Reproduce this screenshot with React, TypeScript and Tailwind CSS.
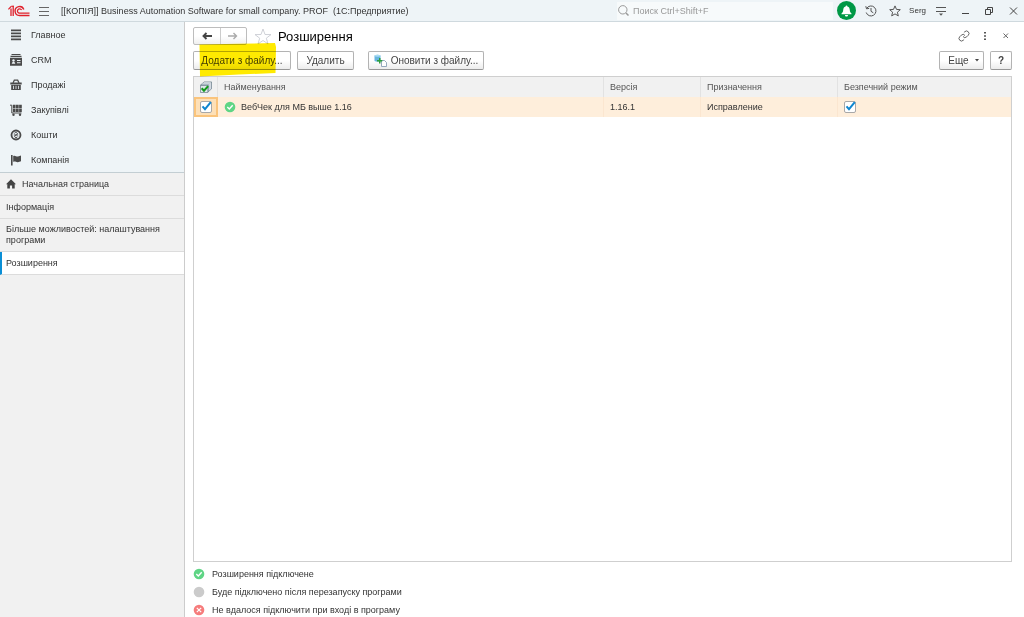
import React, { useState } from "react";

const RED = "#e0202b";

function Logo() {
  return (
    <svg width="22" height="12" viewBox="0 0 22 12" fill="none" stroke={RED} aria-label="1C" role="img">
      <path d="M0.400 4.400 L3.200 1.400" strokeWidth="1.300" />
      <path d="M3 3.600V11M5.200 0.800V11" strokeWidth="1.300" />
      <path d="M3.200 1.300h2.500" strokeWidth="1.100" />
      <path d="M15.800 4.400 A4.500 4.500 0 1 0 11.500 10.500 H21.500" strokeWidth="1.400" />
      <path d="M13.600 5 A2.200 2.200 0 1 0 11.500 8.200 H21.500" strokeWidth="1.300" />
    </svg>
  );
}

type Glyph = "menu" | "crm" | "basket" | "cart" | "money" | "flag";

function SectionIcon({ name }: { name: Glyph }) {
  return (
    <svg width="12" height="12" viewBox="0 0 12 12" fill="#4a4a4a" aria-hidden="true" className="shrink-0">
      {name === "menu" && <path d="M1 .6h10v1.700H1zM1 3.600h10v1.700H1zM1 6.600h10v1.700H1zM1 9.600h10v1.700H1z" />}
      {name === "crm" && (
        <>
          <path d="M1.500 0h9v1h-9zM0.500 1.700h11v1.300h-11zM0 3.800h12v8H0z" />
          <path d="M1.800 9.800c0-1.300.6-1.800 1.700-1.800s1.700.500 1.700 1.800zM7 6h3.500v1H7zM7 8.300h3.500v1H7z" fill="#eef4f7" />
          <circle cx="3.500" cy="6.500" r="1.200" fill="#eef4f7" />
        </>
      )}
      {name === "basket" && (
        <>
          <path d="M3 4 L4.300 1.200 H7.700 L9 4" fill="none" stroke="#4a4a4a" strokeWidth="1.200" />
          <path d="M0.300 3.500h11.400v2H.3zM1.200 6h9.600v5H1.200z" />
          <path d="M3.500 6.800v3.200M6 6.800v3.200M8.500 6.800v3.200" stroke="#eef4f7" strokeWidth=".8" />
        </>
      )}
      {name === "cart" && (
        <>
          <path d="M0 1.200h1.800V9h9.700" fill="none" stroke="#4a4a4a" />
          <path d="M2.900 .8h2.700v3.300H2.900zM6 .8h2.700v3.300H6zM9.100 .8h2.700v3.300H9.100zM2.900 4.500h2.700v3.500H2.900zM6 4.500h2.700v3.500H6zM9.100 4.500h2.700v3.500H9.100z" />
          <circle cx="3.500" cy="10.700" r="1.200" />
          <circle cx="10" cy="10.700" r="1.200" />
        </>
      )}
      {name === "money" && (
        <>
          <circle cx="6" cy="6" r="4.500" fill="none" stroke="#4a4a4a" strokeWidth="1.800" />
          <path d="M4.300 4.500C4.800 3 7.600 3.200 7.400 4.800 7.200 6 4.600 6 4.600 7.400 4.700 8.900 7.200 8.900 7.800 7.500M3.800 6h4.400" fill="none" stroke="#4a4a4a" />
        </>
      )}
      {name === "flag" && <path d="M1 1h1.600v10.500H1zM3.200 2c2-1 3 .8 4.800.5C9 2.300 10 1.500 11 1.500v5.800c-1 0-2 .8-3.200.9C6 8.300 5 7 3.200 7.900z" />}
    </svg>
  );
}

type State = "ok" | "pending" | "failed";

function StatusIcon({ state }: { state: State }) {
  const fill = state === "ok" ? "#5fd585" : state === "pending" ? "#cbcbcb" : "#f67c7c";
  return (
    <svg width="12" height="12" viewBox="0 0 12 12" fill="none" aria-hidden="true" className="shrink-0">
      <circle cx="6" cy="6" r="5.300" fill={fill} />
      {state === "ok" && <path d="M3.300 6.100 5.300 8 8.700 4.300" stroke="#fff" strokeWidth="1.400" />}
      {state === "failed" && <path d="M3.800 3.800 8.200 8.200M8.200 3.800 3.800 8.200" stroke="#fff" strokeWidth="1.200" />}
    </svg>
  );
}

function Check({ label }: { label: string }) {
  const [on, setOn] = useState(true);
  return (
    <span className="inline-grid size-3 align-middle">
      <input
        type="checkbox"
        aria-label={label}
        checked={on}
        onChange={() => setOn(!on)}
        className="col-start-1 row-start-1 size-3 appearance-none rounded-xs border border-[#a8a8a8] bg-white"
      />
      {on && (
        <svg viewBox="0 0 12 12" fill="none" aria-hidden="true" className="pointer-events-none col-start-1 row-start-1 size-3 overflow-visible">
          <path d="M2.500 5.300 5 8.200 10.800 1.200" stroke="#0f86cf" strokeWidth="2" />
        </svg>
      )}
    </span>
  );
}

const buttonBase =
  "flex h-[19px] items-center justify-center rounded-xs border border-[#b3b3b3] border-b-[#979797] bg-linear-to-b from-white from-50% to-[#ececec] text-[10px] text-[#444]";

const sections: { name: Glyph; label: string }[] = [
  { name: "menu", label: "Главное" },
  { name: "crm", label: "CRM" },
  { name: "basket", label: "Продажі" },
  { name: "cart", label: "Закупівлі" },
  { name: "money", label: "Кошти" },
  { name: "flag", label: "Компанія" },
];

const legend: { state: State; label: string }[] = [
  { state: "ok", label: "Розширення підключене" },
  { state: "pending", label: "Буде підключено після перезапуску програми" },
  { state: "failed", label: "Не вдалося підключити при вході в програму" },
];

function TopBar() {
  return (
    <header className="flex h-[22px] shrink-0 items-center border-b border-[#cfd9de] bg-[#eef4f7] pr-[5px] pl-2">
      <Logo />
      <button aria-label="Меню" className="ml-2 flex size-3 items-center justify-center">
        <svg width="12" height="12" viewBox="0 0 12 12" stroke="#666" aria-hidden="true">
          <path d="M1 2.500h10M1 6.500h10M1 10.500h10" />
        </svg>
      </button>
      <span className="ml-[11px] whitespace-pre">[[КОПІЯ]] Business Automation Software for small company. PROF  (1С:Предприятие)</span>
      <label className="ml-auto flex h-[18px] w-[216px] items-center gap-1 bg-[#f7fafb] pl-px">
        <svg width="11" height="11" viewBox="0 0 11 11" fill="none" stroke="#999" aria-hidden="true">
          <circle cx="4.800" cy="4.800" r="4.200" />
          <path d="M8 8l2.500 2.500" strokeWidth="1.500" />
        </svg>
        <input type="search" aria-label="Поиск" placeholder="Поиск Ctrl+Shift+F" className="min-w-0 flex-1 bg-transparent outline-none placeholder:text-[#999]" />
      </label>
      <button aria-label="Сповіщення" className="ml-1 flex size-[19px] items-center justify-center rounded-full bg-[#009846]">
        <svg width="11" height="12" viewBox="0 0 11 12" fill="#fff" aria-hidden="true">
          <path d="M5.500 0.500c.6 0 .9.400.9.900C8.200 1.900 8.700 3.300 8.800 5c.1 1.800.6 2.600 1.700 3.500v.7H.5v-.7C1.600 7.600 2.100 6.800 2.200 5c.1-1.700.6-3.100 2.400-3.600 0-.5.3-.9.900-.9zM4 10h3c0 1-.6 1.500-1.500 1.500S4 11 4 10z" />
        </svg>
      </button>
      <button aria-label="Історія" className="ml-[9px]">
        <svg width="12" height="12" viewBox="0 0 12 12" fill="none" stroke="#555" aria-hidden="true">
          <path d="M1.600 3.500A5 5 0 1 1 1.200 7.500M0.800 1.200l.7 2.600 2.700-.4M6 3v3.300l2.300 1.500" />
        </svg>
      </button>
      <button aria-label="Обране" className="ml-3">
        <svg width="12" height="12" viewBox="0 0 12 12" fill="none" stroke="#555" aria-hidden="true">
          <path d="M6 .9l1.500 3.500 3.800.300-2.900 2.500.9 3.700L6 8.900l-3.300 2 .9-3.700L.7 4.700l3.800-.3z" />
        </svg>
      </button>
      <button className="ml-2 text-[8px]">Serg</button>
      <button aria-label="Налаштування" className="ml-[9px]">
        <svg width="12" height="10" viewBox="0 0 12 10" stroke="#555" aria-hidden="true">
          <path d="M1 1.500h10M1 5.500h10" />
          <path d="M4 7.500h4L6 9.800z" fill="#555" stroke="none" />
        </svg>
      </button>
      <button aria-label="Згорнути" className="ml-3">
        <svg width="12" height="10" viewBox="0 0 12 10" stroke="#444" aria-hidden="true"><path d="M3 7.500h7" /></svg>
      </button>
      <button aria-label="Розгорнути" className="ml-3">
        <svg width="12" height="10" viewBox="0 0 12 10" fill="none" stroke="#444" aria-hidden="true">
          <path d="M2.500 3.500h5v5h-5zM4.500 3V1.500h5v5H8" />
        </svg>
      </button>
      <button aria-label="Закрити програму" className="ml-3">
        <svg width="12" height="10" viewBox="0 0 12 10" stroke="#444" aria-hidden="true"><path d="M3 1.500l7 7M10 1.500l-7 7" /></svg>
      </button>
    </header>
  );
}

function Sidebar() {
  const row = "flex border-b border-[#dcdcdc] px-1.5";
  return (
    <aside className="flex w-[185px] shrink-0 flex-col border-r border-[#cccccc] bg-[#f1f1f1]">
      <nav aria-label="Розділи" className="border-b border-[#c3ced3] bg-[#eef4f7]">
        {sections.map((s) => (
          <a key={s.name} href="#" className="flex h-[25px] items-center gap-[9px] pl-[10px]">
            <SectionIcon name={s.name} />
            {s.label}
          </a>
        ))}
      </nav>
      <nav aria-label="Відкриті вікна" className="leading-[11px]">
        <a href="#" className={`${row} h-[23px] items-center gap-[6px]`}>
          <svg width="10" height="10" viewBox="0 0 10 10" fill="#444" aria-hidden="true">
            <path d="M5 .3L10 5.200H8.700V9.500H6.100V6.500H3.900v3H1.300V5.200H0z" />
          </svg>
          Начальная страница
        </a>
        <a href="#" className={`${row} h-[23px] items-center`}>Інформація</a>
        <a href="#" className={`${row} h-[33px] items-center`}>Більше можливостей: налаштування програми</a>
        <a href="#" aria-current="page" className="flex h-[23px] items-center border-b border-l-2 border-b-[#dcdcdc] border-l-[#0b8fd6] bg-white pl-1">
          Розширення
        </a>
      </nav>
    </aside>
  );
}

function TitleRow() {
  return (
    <div className="flex h-[18px] items-center">
      <div className="flex h-[18px] w-[54px] rounded-xs border border-[#bdbdbd] bg-linear-to-b from-white from-50% to-[#f0f0f0]">
        <button aria-label="Назад" className="flex flex-1 items-center justify-center border-r border-[#cccccc]">
          <svg width="10" height="8" viewBox="0 0 10 8" fill="none" stroke="#444" strokeWidth="1.900" aria-hidden="true"><path d="M10 4H1.500M4.500 1L1.500 4l3 3" /></svg>
        </button>
        <button aria-label="Вперед" className="flex flex-1 items-center justify-center">
          <svg width="10" height="8" viewBox="0 0 10 8" fill="none" stroke="#aaa" strokeWidth="1.400" aria-hidden="true"><path d="M0 4h8.500M5.500 1l3 3-3 3" /></svg>
        </button>
      </div>
      <button aria-label="Додати в обране" className="ml-[7px]">
        <svg width="18" height="17" viewBox="0 0 18 17" fill="none" stroke="#c9ccd2" strokeWidth=".9" aria-hidden="true">
          <path d="M9 1l2 5.500 6 .1-4.700 3.600 1.700 5.700-5-3.400-5 3.400 1.700-5.700L1 6.600l6-.1z" />
        </svg>
      </button>
      <h1 className="ml-[6px] pt-px text-[13px] leading-4 text-black">Розширення</h1>
      <div className="ml-auto flex items-center gap-3 pr-0.5">
        <button aria-label="Посилання">
          <svg width="12" height="12" viewBox="0 0 24 24" fill="none" stroke="#666" strokeWidth="2" aria-hidden="true">
            <path d="M10 13a5 5 0 0 0 7.540.540l3-3a5 5 0 0 0-7.070-7.070l-1.720 1.710" />
            <path d="M14 11a5 5 0 0 0-7.540-.540l-3 3a5 5 0 0 0 7.070 7.070l1.710-1.710" />
          </svg>
        </button>
        <button aria-label="Більше дій">
          <svg width="8" height="10" viewBox="0 0 8 10" fill="#555" aria-hidden="true"><path d="M2 1h2v1.500H2zM2 4.200h2v1.500H2zM2 7.400h2v1.500H2z" /></svg>
        </button>
        <button aria-label="Закрити">
          <svg width="8" height="8" viewBox="0 0 8 8" stroke="#666" aria-hidden="true"><path d="M1.500 1.500l4.500 4.500M6 1.500L1.500 6" /></svg>
        </button>
      </div>
    </div>
  );
}

function Toolbar() {
  return (
    <div className="mt-[6px] flex items-center">
      <div className="relative">
        <button className={`${buttonBase} w-[98px]`}>Додати з файлу...</button>
        <svg width="78" height="34" viewBox="0 0 78 34" aria-hidden="true" className="pointer-events-none absolute -top-2 left-1.5 mix-blend-multiply">
          <path d="M0.500 1.500L40 .8 76 0 77 4 76.500 30 40 31.500 1 33.500z" fill="#ffea00" />
        </svg>
      </div>
      <button className={`${buttonBase} ml-[6px] w-[57px]`}>Удалить</button>
      <button className={`${buttonBase} ml-[14px] w-[116px] gap-1`}>
        <svg width="13" height="13" viewBox="0 0 13 13" aria-hidden="true">
          <path d="M.5 1.500Q3.500-.2 6.500 1.500V7Q3.500 8.500.5 7z" fill="#67b5df" />
          <ellipse cx="3.500" cy="1.700" rx="3" ry="1" fill="#a9dcf2" />
          <path d="M7.500 6.500h3l2 2v4h-5z" fill="#fff" stroke="#7b94ad" strokeWidth=".8" />
          <path d="M3 6h2V4h1.500v2h1.800v1.500H6.500v2H5v-2H3z" fill="#2e9e3a" />
        </svg>
        Оновити з файлу...
      </button>
      <button className={`${buttonBase} ml-auto w-[45px] gap-1.5 pl-1`}>
        Еще
        <svg width="4" height="3" viewBox="0 0 4 3" fill="#444" aria-hidden="true"><path d="M0 0h4L2 2.500z" /></svg>
      </button>
      <button aria-label="Довідка" className={`${buttonBase} ml-[6px] w-[22px] font-bold`}>?</button>
    </div>
  );
}

function ExtensionsTable() {
  const th = "border-r border-[#e2e2e2] px-1.5 font-normal last:border-r-0";
  const td = "border-r border-[#fbe6d0] px-1.5 last:border-r-0";
  return (
    <div className="mt-[6px] min-h-0 flex-1 border border-[#cfcfcf] bg-white">
      <table className="w-full table-fixed border-separate border-spacing-0 text-left">
        <colgroup>
          <col className="w-6" />
          <col />
          <col className="w-[97px]" />
          <col className="w-[137px]" />
          <col className="w-[173px]" />
        </colgroup>
        <thead>
          <tr className="h-5 bg-[#f1f1f1] text-[#555]">
            <th className="border-r border-[#e2e2e2] p-0">
              <svg width="12" height="12" viewBox="0 0 13 13" fill="none" aria-label="Стан" role="img" className="mx-auto">
                <path d="M.5 4.500L4.500 1h8v7.500l-4 3.500z" fill="#9fb0bd" stroke="#6d7f8c" strokeWidth=".8" />
                <path d="M2.500 3h8v7M4 1.800h7.500v7" stroke="#e9eef1" strokeWidth=".8" />
                <path d="M.5 4.800h8v7.700h-8z" fill="#dfe6ea" stroke="#6d7f8c" strokeWidth=".8" />
                <path d="M1.800 7.800l2.500 2.700L8.800 5.500" stroke="#119a1c" strokeWidth="2.200" />
              </svg>
            </th>
            <th className={th}>Найменування</th>
            <th className={th}>Версія</th>
            <th className={th}>Призначення</th>
            <th className={th}>Безпечний режим</th>
          </tr>
        </thead>
        <tbody>
          <tr className="h-5 bg-[#feeedb]">
            <td className="border-2 border-[#fac47c] bg-[#fde0b8] p-0 text-center leading-none">
              <Check label="Увімкнено" />
            </td>
            <td className={td}>
              <span className="flex items-center gap-[5px]">
                <StatusIcon state="ok" />
                ВебЧек для МБ выше 1.16
              </span>
            </td>
            <td className={td}>1.16.1</td>
            <td className={td}>Исправление</td>
            <td className={`${td} leading-none`}>
              <Check label="Безпечний режим" />
            </td>
          </tr>
        </tbody>
      </table>
    </div>
  );
}

export default function App() {
  return (
    <div className="flex h-screen flex-col overflow-hidden bg-white font-['Liberation_Sans',Arial,sans-serif] text-[9px] leading-3 text-[#333]">
      <TopBar />
      <div className="flex min-h-0 flex-1">
        <Sidebar />
        <main className="flex min-w-0 flex-1 flex-col pt-[5px] pr-3 pb-px pl-2">
          <TitleRow />
          <Toolbar />
          <ExtensionsTable />
          <ul className="mt-[6px] flex flex-col gap-[6px]">
            {legend.map((l) => (
              <li key={l.state} className="flex items-center gap-[7px]">
                <StatusIcon state={l.state} />
                {l.label}
              </li>
            ))}
          </ul>
        </main>
      </div>
    </div>
  );
}
